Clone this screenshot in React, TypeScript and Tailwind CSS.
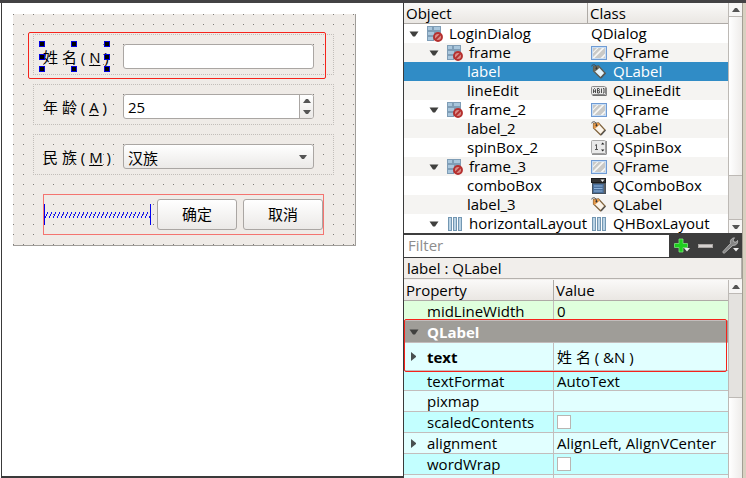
import type { ReactNode } from "react";

type TreeRow = {
  name: string;
  cls: string;
  level: 0 | 1 | 2;
  icon?: ReactNode;
  clsIcon?: ReactNode;
};

function Caret({ className = "" }: { className?: string }) {
  return (
    <svg className={`shrink-0 ${className}`} width="10" height="6" viewBox="0 0 10 6" aria-hidden="true">
      <path d="M0.5 0.5h9L6 5.5H4z" fill="#40403e" />
    </svg>
  );
}

function CaretUp() {
  return (
    <svg width="8" height="4" viewBox="0 0 8 4" aria-hidden="true">
      <path d="M3 0h2l3 4H0z" fill="#555" />
    </svg>
  );
}

function CaretDown() {
  return (
    <svg width="8" height="4" viewBox="0 0 8 4" aria-hidden="true">
      <path d="M3 4h2l3-4H0z" fill="#555" />
    </svg>
  );
}

function CaretRight() {
  return (
    <svg width="5" height="9" viewBox="0 0 5 9" aria-hidden="true">
      <path d="M0 0l5 4v1L0 9z" fill="#4a5050" />
    </svg>
  );
}

function BrokenLayoutIcon() {
  return (
    <svg className="shrink-0" width="16" height="16" viewBox="0 0 16 16" aria-hidden="true">
      <g fill="#a9c6dc" stroke="#7f9db6" strokeWidth="1">
        <rect x="0.5" y="0.5" width="5" height="4" />
        <rect x="6.5" y="0.5" width="7" height="4" />
        <rect x="0.5" y="5.5" width="7" height="4" />
        <rect x="8.5" y="5.5" width="5" height="3" />
        <rect x="0.5" y="10.5" width="6" height="4" />
      </g>
      <circle cx="11" cy="11" r="4" fill="#d98c88" stroke="#b5302f" strokeWidth="1.9" />
      <path d="M8.4 13.6l5.2-5.2" stroke="#b5302f" strokeWidth="1.9" />
    </svg>
  );
}

function FrameIcon() {
  return (
    <svg className="shrink-0" width="16" height="14" viewBox="0 0 16 14" aria-hidden="true">
      <rect x="0.5" y="0.5" width="15" height="13" fill="#c9def5" stroke="#6f9bd4" />
      <rect x="2" y="2" width="12" height="10" fill="#c9c9c7" />
      <path d="M2 11l9-9h2.5L3.500 12H2zM9.500 12L14 7.500V10l-2 2zM2 6l4-4h1.500L2 7.500z" fill="#f6f6f4" />
    </svg>
  );
}

function LabelIcon({ selected = false }: { selected?: boolean }) {
  return (
    <svg className="shrink-0" width="16" height="15" viewBox="0 0 16 15" aria-hidden="true">
      <path
        d="M2.500 2.500L7.500 2l6.500 7-4.500 4.800L2.500 7z"
        fill={selected ? "#e4f3fb" : "#fbf4ea"}
        stroke={selected ? "#5b5a50" : "#80633d"}
        strokeWidth="1.200"
      />
      <path d="M2.500 2.500L7.500 2l1.500 1.600L3.600 8 2.500 7z" fill={selected ? "#6c6a5b" : "#e79a4a"} />
      <path d="M0 2.500C2 0 5 0 5.500 4" fill="none" stroke="#444" />
      <circle cx="5.500" cy="4.500" r="1" fill="#333" />
      <path d="M10 14l4.600-4.800" stroke="#555" strokeWidth="1.200" />
    </svg>
  );
}

function LineEditIcon() {
  return (
    <svg className="shrink-0" width="16" height="10" viewBox="0 0 16 10" aria-hidden="true">
      <rect x="0.500" y="0.500" width="14" height="8" rx="1" fill="#e8e8e8" stroke="#8a8a8a" />
      <path d="M15.300 1.500v8H1.500" fill="none" stroke="#6d6d6d" />
      <path
        d="M2.500 7V3.500L3.500 2.500l1 1V7M2.500 5.200h2M6.500 2.500V7h1.700L8.700 5.800 8 4.700 8.500 3.400 8 2.500zM6.500 4.700h1.500M10.500 2.500V7M12 2.500h1V7h-1"
        fill="none"
        stroke="#3d3d3d"
        strokeWidth="0.900"
      />
    </svg>
  );
}

function SpinBoxIcon() {
  return (
    <svg className="shrink-0" width="16" height="15" viewBox="0 0 16 15" aria-hidden="true">
      <rect x="0.500" y="0.500" width="14" height="13" rx="1" fill="#e9e9e9" stroke="#a9a9a9" />
      <path d="M15.300 1v13.300H1" fill="none" stroke="#777" />
      <path d="M4 5.500l1.500-1V9M4 9.500h3" fill="none" stroke="#555" />
      <path d="M10 4.500l1.700-2 1.700 2zM10 9.500l1.700 2 1.700-2z" fill="#222" />
    </svg>
  );
}

function ComboBoxIcon() {
  return (
    <svg className="shrink-0" width="16" height="16" viewBox="0 0 16 16" aria-hidden="true">
      <rect x="0.500" y="0.500" width="14" height="4" fill="#333" stroke="#1d1d1d" />
      <path d="M9.500 1.500h4l-2 2.600z" fill="#eee" />
      <rect x="1.500" y="5.500" width="13" height="10" fill="#4a6f9b" stroke="#45525f" />
      <path d="M3 8h8.500M3 10.500h8.500M3 13h8.500" stroke="#8fb3da" strokeWidth="1.200" />
      <path d="M13.500 6v9" stroke="#626262" strokeWidth="1.500" />
    </svg>
  );
}

function HBoxIcon() {
  return (
    <svg className="shrink-0" width="16" height="14" viewBox="0 0 16 14" aria-hidden="true">
      <g fill="#b9d2e4" stroke="#7397b2">
        <rect x="1.500" y="0.500" width="3" height="13" />
        <rect x="6.500" y="0.500" width="3" height="13" />
        <rect x="11.500" y="0.500" width="3" height="13" />
      </g>
    </svg>
  );
}

const treeRows: TreeRow[] = [
  { name: "LoginDialog", cls: "QDialog", level: 0, icon: <BrokenLayoutIcon /> },
  { name: "frame", cls: "QFrame", level: 1, icon: <BrokenLayoutIcon />, clsIcon: <FrameIcon /> },
  { name: "label", cls: "QLabel", level: 2, clsIcon: <LabelIcon selected /> },
  { name: "lineEdit", cls: "QLineEdit", level: 2, clsIcon: <LineEditIcon /> },
  { name: "frame_2", cls: "QFrame", level: 1, icon: <BrokenLayoutIcon />, clsIcon: <FrameIcon /> },
  { name: "label_2", cls: "QLabel", level: 2, clsIcon: <LabelIcon /> },
  { name: "spinBox_2", cls: "QSpinBox", level: 2, clsIcon: <SpinBoxIcon /> },
  { name: "frame_3", cls: "QFrame", level: 1, icon: <BrokenLayoutIcon />, clsIcon: <FrameIcon /> },
  { name: "comboBox", cls: "QComboBox", level: 2, clsIcon: <ComboBoxIcon /> },
  { name: "label_3", cls: "QLabel", level: 2, clsIcon: <LabelIcon /> },
  { name: "horizontalLayout", cls: "QHBoxLayout", level: 1, icon: <HBoxIcon />, clsIcon: <HBoxIcon /> },
];

const indent = { 0: "pl-[5px]", 1: "pl-[25px]", 2: "pl-[63px]" };

function ScrollBar({ top, thumb, end }: { top: string; thumb: string; end?: boolean }) {
  return (
    <div className="flex w-[14px] shrink-0 flex-col border-l border-[#bdb9b5] bg-[#e4e2df]">
      <button
        type="button"
        aria-label="Scroll up"
        className="flex h-[14px] shrink-0 items-center justify-center border-b border-[#bdb9b5] bg-[#f7f6f5]"
      >
        <CaretUp />
      </button>
      <div className={`shrink-0 ${top}`} />
      <div className={`bg-linear-to-r from-white to-[#eeecea] ${thumb}`} />
      {end && (
        <>
          <div className="flex-1" />
          <button
            type="button"
            aria-label="Scroll down"
            className="flex h-[14px] shrink-0 items-center justify-center border-t border-[#bdb9b5] bg-[#f7f6f5]"
          >
            <CaretDown />
          </button>
        </>
      )}
    </div>
  );
}

const headerCell =
  "h-[21px] border-b border-[#aeaaa6] bg-linear-to-b from-[#faf9f8] to-[#eae7e3] p-0 text-left font-normal";

function ObjectInspector() {
  return (
    <section className="flex h-[230px] shrink-0 bg-white" aria-label="Object inspector">
      <div className="min-w-0 flex-1 overflow-hidden">
        <table className="w-full table-fixed border-separate border-spacing-0 leading-[19px]">
          <thead>
            <tr>
              <th className={`${headerCell} w-[184px] border-r pl-[2px]`}>Object</th>
              <th className={`${headerCell} pl-[2px]`}>Class</th>
            </tr>
          </thead>
          <tbody>
            {treeRows.map((row) => (
              <tr
                key={row.name}
                className={row.name === "label" ? "bg-[#308cc6] text-white" : "even:bg-[#f5f4f2]"}
              >
                <td className="p-0">
                  <div className={`flex h-[19px] items-center overflow-hidden whitespace-nowrap ${indent[row.level]}`}>
                    {row.icon && (
                      <>
                        <Caret className="mr-2" />
                        {row.icon}
                        <span className="w-[6px] shrink-0" />
                      </>
                    )}
                    {row.name}
                  </div>
                </td>
                <td className="p-0">
                  <div className="flex h-[19px] items-center gap-[6px] pl-[3px]">
                    {row.clsIcon}
                    {row.cls}
                  </div>
                </td>
              </tr>
            ))}
          </tbody>
        </table>
      </div>
      <ScrollBar top="h-0" thumb="h-[159px] border-b border-[#bdb9b5]" end />
    </section>
  );
}

function FilterBar() {
  return (
    <div className="flex h-[25px] shrink-0 items-center bg-[#3d3d3d]">
      <input
        aria-label="Filter"
        placeholder="Filter"
        className="h-[22px] min-w-0 flex-1 bg-white pl-1 outline-none placeholder:text-[#8d8d8d]"
      />
      <div className="flex w-[73px] shrink-0 items-center gap-2 pl-[5px]">
        <button type="button" aria-label="Add property">
          <svg width="16" height="16" viewBox="0 0 16 16" aria-hidden="true">
            <path d="M5 1h4v4.500h4.500v4H9V14H5V9.500H0.500v-4H5z" fill="#1fce1f" stroke="#7be67b" strokeWidth="0.800" />
            <path d="M10 10h6l-3 3.500z" fill="#eee" />
          </svg>
        </button>
        <button type="button" aria-label="Remove property">
          <svg width="16" height="16" viewBox="0 0 16 16" aria-hidden="true">
            <rect x="0.500" y="6.500" width="14" height="3" fill="#d5d1cf" stroke="#aaa6a4" />
          </svg>
        </button>
        <button type="button" aria-label="Configure">
          <svg width="17" height="17" viewBox="0 0 17 17" aria-hidden="true">
            <path
              d="M1 14.500L8.500 6.500C7.800 3.500 9.500 1 12.500 0.800L11 3l1 2 2.200.2L15.500 3.500c.8 3-1.800 5.200-4.600 4.800L2.500 16C1.500 16.500 0.500 15.500 1 14.500z"
              fill="#858585"
              stroke="#c8c8c8"
              strokeWidth="0.800"
            />
            <path d="M11 11h6l-3 3.500z" fill="#eee" />
          </svg>
        </button>
      </div>
    </div>
  );
}

type PropRow = { name: string; value?: string; check?: boolean; expand?: boolean; bold?: boolean; color: string };

const propRows: PropRow[] = [
  { name: "text", value: "姓 名 ( &N )", expand: true, bold: true, color: "h-[28px] bg-[#e1ffff]" },
  { name: "textFormat", value: "AutoText", color: "h-[20px] bg-[#c3ffff]" },
  { name: "pixmap", color: "h-[21px] bg-[#e1ffff]" },
  { name: "scaledContents", check: true, color: "h-[21px] bg-[#c3ffff]" },
  { name: "alignment", value: "AlignLeft, AlignVCenter", expand: true, color: "h-[21px] bg-[#e1ffff]" },
  { name: "wordWrap", check: true, color: "h-[21px] bg-[#c3ffff]" },
  { name: "", color: "h-[21px] bg-[#e1ffff]" },
];

const propName = "border-r border-b border-[#c3bdbc] p-0";
const propValue = "border-b border-[#c3bdbc] p-0 pl-[3px] whitespace-nowrap";

function PropertyEditor() {
  return (
    <section className="flex min-h-0 flex-1 flex-col bg-[#f1eeeb]" aria-label="Property editor">
      <div className="h-[21px] shrink-0 border-r border-b border-[#b5b1ad] pl-[3px] leading-[20px]">label : QLabel</div>
      <div className="relative flex min-h-0 flex-1 pt-px">
        <div className="min-w-0 flex-1 overflow-hidden">
          <table className="w-full table-fixed border-separate border-spacing-0 leading-[18px]">
            <thead>
              <tr>
                <th className={`${headerCell} w-[150px] border-r pl-[2px]`}>Property</th>
                <th className={`${headerCell} pl-[2px]`}>Value</th>
              </tr>
            </thead>
            <tbody>
              <tr className="h-[20px] bg-[#dfffdd]">
                <td className={propName}>
                  <div className="pl-[23px]">midLineWidth</div>
                </td>
                <td className={propValue}>0</td>
              </tr>
              <tr className="h-[22px] bg-[#9f9d98]">
                <td colSpan={2} className="border-b border-[#c3bdbc] p-0 font-bold text-white">
                  <div className="flex items-center gap-2 pl-[5px]">
                    <Caret />
                    QLabel
                  </div>
                </td>
              </tr>
              {propRows.map((row) => (
                <tr key={row.name} className={row.color}>
                  <td className={propName}>
                    <div className="flex items-center pl-[7px]">
                      <span className="w-[16px] shrink-0">{row.expand && <CaretRight />}</span>
                      <span id={`prop-${row.name}`} className={row.bold ? "font-bold" : ""}>
                        {row.name}
                      </span>
                    </div>
                  </td>
                  <td className={propValue}>
                    {row.check ? (
                      <input
                        type="checkbox"
                        aria-labelledby={`prop-${row.name}`}
                        className="block size-[14px] appearance-none border border-[#bab5b2] bg-white"
                      />
                    ) : (
                      row.value
                    )}
                  </td>
                </tr>
              ))}
            </tbody>
          </table>
        </div>
        <ScrollBar top="h-[103px]" thumb="flex-1 border-t border-[#bdb9b5]" />
        <div className="pointer-events-none absolute top-[40px] right-[15px] left-0 h-[53px] rounded-[2px] border border-[#f5231b]" />
      </div>
    </section>
  );
}

function SelectionHandles() {
  const handle = "size-[6px] border border-[#0000e0] bg-black";
  return (
    <div className="pointer-events-none absolute -top-[3px] -left-[4px] grid h-[31px] w-[71px] grid-cols-3 content-between">
      <i className={handle} />
      <i className={`${handle} justify-self-center`} />
      <i className={`${handle} justify-self-end`} />
      <i className={handle} />
      <i className={`${handle} col-start-3 justify-self-end`} />
      <i className={handle} />
      <i className={`${handle} justify-self-center`} />
      <i className={`${handle} justify-self-end`} />
    </div>
  );
}

function FormFrame({
  text,
  mnemonic,
  htmlFor,
  selected,
  children,
}: {
  text: string;
  mnemonic: string;
  htmlFor: string;
  selected?: boolean;
  children: ReactNode;
}) {
  return (
    <div className="relative flex h-[41px] items-center border border-dotted border-[#c2beba] pt-1 pr-[19px] pl-[9px]">
      <label htmlFor={htmlFor} className="relative h-[25px] w-[80px] shrink-0 leading-[27px] whitespace-nowrap">
        {text} ( <span className="underline underline-offset-2">{mnemonic}</span> )
        {selected && <SelectionHandles />}
      </label>
      {children}
      {selected && (
        <div className="pointer-events-none absolute -top-[3px] right-[7px] -left-[6px] h-[47px] rounded-[2px] border border-[#f5231b]" />
      )}
    </div>
  );
}

const fieldBox = "h-[25px] min-w-0 flex-1 rounded-[3px] border border-[#aaa6a3]";
const dialogButton =
  "h-[31px] w-[80px] shrink-0 rounded-[3px] border border-[#aaa6a3] bg-linear-to-b from-white to-[#ebe9e7]";

function Spring() {
  return (
    <div className="flex h-[21px] min-w-0 flex-1 items-center border-x border-[#0000f0]">
      <svg className="h-[6px] w-full" aria-hidden="true">
        <defs>
          <pattern id="coil" width="4" height="6" patternUnits="userSpaceOnUse">
            <path d="M0 4h1v2H0zM1 2h1v2H1zM2 0h1v2H2z" fill="#1010f5" shapeRendering="crispEdges" />
          </pattern>
        </defs>
        <rect width="100%" height="6" fill="url(#coil)" />
      </svg>
    </div>
  );
}

function LoginForm() {
  return (
    <form
      onSubmit={(e) => e.preventDefault()}
      className="flex w-[343px] flex-col gap-[9px] border-r border-b border-[#a09d99] bg-[#efebe7] bg-[conic-gradient(from_270deg_at_1px_1px,#7f7c79_90deg,transparent_0)] bg-[length:10px_10px] pt-[20px] pr-[21px] pb-[10px] pl-[20px]"
    >
      <FormFrame text="姓 名" mnemonic="N" htmlFor="name" selected>
        <input id="name" className={`${fieldBox} bg-white px-1 outline-none`} />
      </FormFrame>
      <FormFrame text="年 龄" mnemonic="A" htmlFor="age">
        <div className={`${fieldBox} flex overflow-hidden bg-white`}>
          <input
            id="age"
            type="number"
            defaultValue={25}
            className="min-w-0 flex-1 appearance-none px-1 pt-[2px] outline-none [appearance:textfield]"
          />
          <div className="flex w-[14px] shrink-0 flex-col border-l border-[#aaa6a3] bg-linear-to-b from-white to-[#ebe9e7]">
            <button type="button" aria-label="Increase" className="flex flex-1 items-center justify-center">
              <CaretUp />
            </button>
            <button type="button" aria-label="Decrease" className="flex flex-1 items-center justify-center">
              <CaretDown />
            </button>
          </div>
        </div>
      </FormFrame>
      <FormFrame text="民 族" mnemonic="M" htmlFor="nation">
        <div className="relative flex min-w-0 flex-1">
          <select
            id="nation"
            className={`${fieldBox} appearance-none bg-linear-to-b from-white to-[#ebe9e7] px-1 pt-[2px] outline-none`}
          >
            <option>汉族</option>
          </select>
          <span className="pointer-events-none absolute inset-y-0 right-[7px] flex items-center">
            <CaretDown />
          </span>
        </div>
      </FormFrame>
      <div className="mt-[10px] mr-[10px] ml-[10px] flex h-[41px] items-center gap-[6px] border border-[#f47470]">
        <Spring />
        <button type="submit" className={dialogButton}>
          确定
        </button>
        <button type="button" className={dialogButton}>
          取消
        </button>
      </div>
    </form>
  );
}

export default function App() {
  return (
    <div className="flex h-screen flex-col overflow-hidden bg-white font-['Open_Sans','Noto_Sans_CJK_SC',sans-serif] text-[15px] text-black">
      <div className="h-[3px] shrink-0 bg-[#434244]" />
      <div className="flex min-h-0 flex-1">
        <main className="min-w-0 flex-1 pl-px">
          <div className="h-full border-x border-b-2 border-[#3a3a3a] bg-white pt-[11px] pl-[11px]">
            <LoginForm />
          </div>
        </main>
        <aside className="flex w-[338px] shrink-0 flex-col">
          <ObjectInspector />
          <FilterBar />
          <PropertyEditor />
        </aside>
        <div className="w-[4px] shrink-0 border-l border-[#a39e94] bg-[#d8d0c0]" />
      </div>
    </div>
  );
}
